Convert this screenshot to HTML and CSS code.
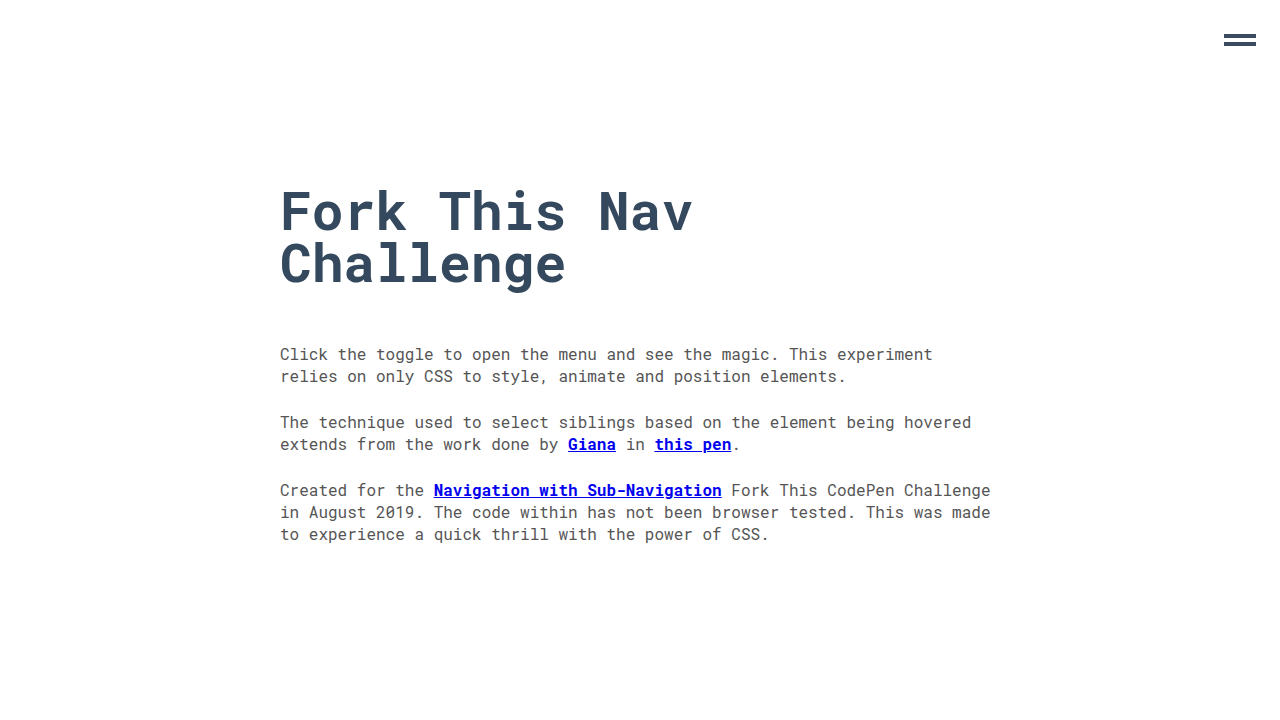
FILE: index.html
```html
<!DOCTYPE html>
<html lang="en">
<head>
<meta charset="utf-8">
<title>Fork This Nav Challenge</title>
<link rel="stylesheet" href="styles.css">
</head>
<body>
<header class="topbar">
  <button class="toggle" aria-label="Open menu">
    <span class="bar"></span>
    <span class="bar"></span>
  </button>
</header>
<main class="content">
  <h1 class="title">Fork This Nav<br>Challenge</h1>
  <p class="text">Click the toggle to open the menu and see the magic. This experiment relies on only CSS to style, animate and position elements.</p>
  <p class="text">The technique used to select siblings based on the element being hovered extends from the work done by <a class="link" href="#">Giana</a> in <a class="link" href="#">this pen</a>.</p>
  <p class="text">Created for the <a class="link" href="#">Navigation with Sub-Navigation</a> Fork This CodePen Challenge in August 2019. The code within has not been browser tested. This was made to experience a quick thrill with the power of CSS.</p>
</main>
</body>
</html>
```
FILE: styles.css
```css
html, body {
  margin: 0;
  padding: 0;
  background: #ffffff;
}
body {
  font-family: "Roboto Mono", "DejaVu Sans Mono", "Liberation Mono", monospace;
  color: #34495e;
}
.topbar {
  display: flex;
  justify-content: flex-end;
  padding: 34px 24px 0 0;
}
.toggle {
  display: flex;
  flex-direction: column;
  gap: 4px;
  width: 32px;
  padding: 0;
  border: 0;
  background: none;
  cursor: pointer;
}
.bar {
  display: block;
  width: 32px;
  height: 4px;
  background: #3b4a5e;
}
.content {
  width: 720px;
  margin: 137px auto 0;
}
.title {
  margin: 0 0 56px;
  font-size: 53px;
  line-height: 52px;
  font-weight: 700;
  color: #34495e;
}
.text {
  margin: 0 0 24px;
  font-size: 16px;
  line-height: 22px;
  color: #555555;
}
.link {
  color: #0000ee;
  font-weight: 700;
  text-decoration: underline;
}
```
